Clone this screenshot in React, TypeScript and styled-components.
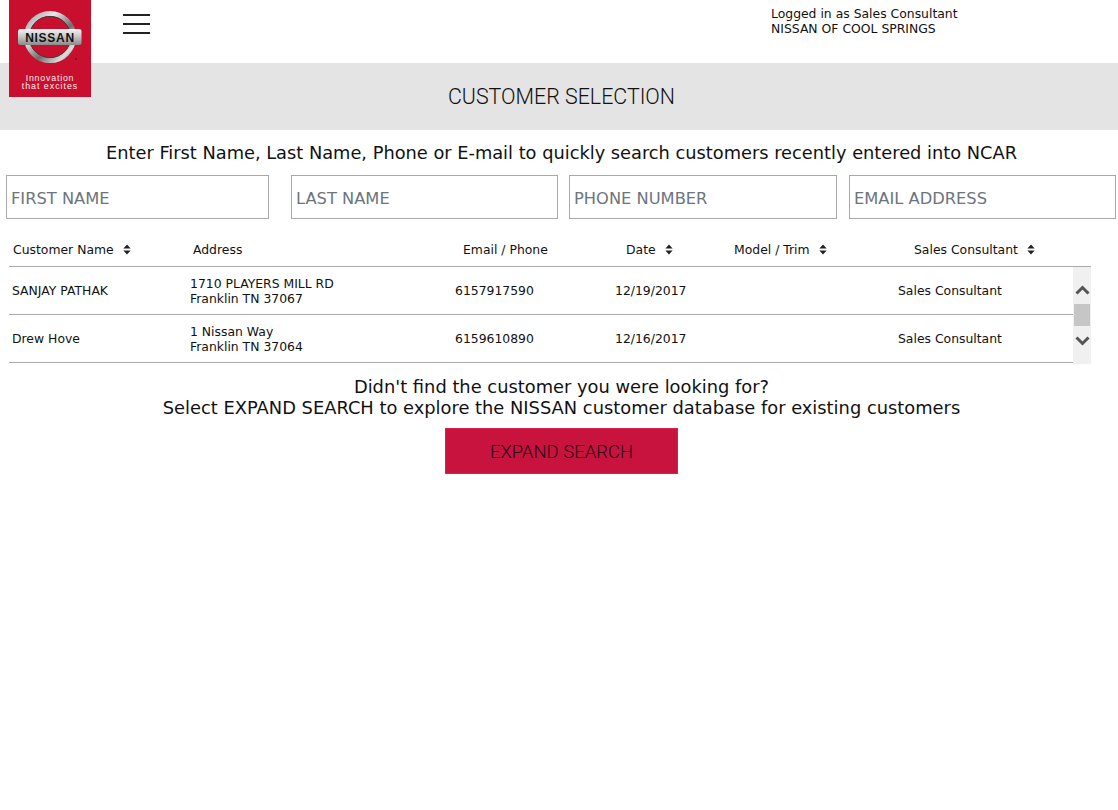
import styled, { createGlobalStyle } from 'styled-components';

const GlobalStyle = createGlobalStyle`
  html, body {
    margin: 0;
    padding: 0;
    background: #fff;
    font-family: "DejaVu Sans", "Liberation Sans", sans-serif;
    color: #111;
  }
`;

const Page = styled.div`
  position: relative;
  width: 1118px;
  height: 810px;
  overflow: hidden;
`;

const TopBar = styled.header`
  height: 63px;
  display: flex;
  padding-left: 123px;
`;

const MenuButton = styled.button`
  width: 27px;
  height: 20px;
  margin-top: 14px;
  padding: 0;
  border: none;
  background: none;
  display: flex;
  flex-direction: column;
  justify-content: space-between;
`;

const MenuLine = styled.span`
  display: block;
  height: 2px;
  background: #222;
`;

const UserInfo = styled.div`
  margin-left: 621px;
  padding-top: 6px;
  font-size: 12.4px;
  line-height: 15px;
  white-space: nowrap;
`;

const LogoBox = styled.div`
  position: absolute;
  left: 9px;
  top: 0;
  width: 82px;
  height: 97px;
  background: #c8102e;
`;

const Banner = styled.div`
  height: 67px;
  padding-left: 5px;
  background: #e4e4e4;
  display: flex;
  align-items: center;
  justify-content: center;
  font-family: Roboto, sans-serif;
  font-weight: 300;
  font-size: 21.4px;
  color: #111;
`;

const Intro = styled.p`
  margin: 0;
  height: 45px;
  padding-left: 5px;
  line-height: 45px;
  text-align: center;
  font-size: 17.8px;
  white-space: nowrap;
`;

const SearchRow = styled.div`
  display: flex;
  padding-left: 6px;
`;

const SearchInput = styled.input<{ $width: number; $after: number }>`
  box-sizing: border-box;
  width: ${(p) => p.$width}px;
  height: 44px;
  margin-right: ${(p) => p.$after}px;
  padding: 3px 4px 0;
  border: 1px solid #a9a9a9;
  outline: none;
  font-family: inherit;
  font-size: 16.3px;
  &::placeholder {
    color: #6c757d;
    opacity: 1;
  }
`;

const TableWrap = styled.div`
  width: 1082px;
  margin-left: 9px;
  margin-top: 11px;
`;

const HeadRow = styled.div`
  display: grid;
  grid-template-columns: 180px 270px 163px 108px 180px 181px;
  height: 34px;
  padding-top: 2px;
  align-items: center;
  border-bottom: 1px solid #aaa;
  font-size: 12.4px;
`;

const HeadCell = styled.div<{ $inset: number }>`
  display: flex;
  align-items: center;
  gap: 9px;
  padding-left: ${(p) => p.$inset}px;
  white-space: nowrap;
`;

const Body = styled.div`
  display: flex;
`;

const Rows = styled.div`
  width: 1064px;
`;

const Row = styled.div`
  display: grid;
  grid-template-columns: 177px 266px 160px 105px 177px 179px;
  height: 46px;
  padding-top: 1px;
  align-items: center;
  border-bottom: 1px solid #aaa;
  font-size: 12.4px;
  line-height: 15.5px;
`;

const Cell = styled.div<{ $inset: number }>`
  padding-left: ${(p) => p.$inset}px;
  white-space: nowrap;
`;

const ScrollTrack = styled.div`
  width: 18px;
  height: 97px;
  background: #f0f0f0;
  display: flex;
  flex-direction: column;
  align-items: center;
  padding-top: 18px;
  box-sizing: border-box;
`;

const ScrollThumb = styled.div`
  width: 16px;
  height: 22px;
  margin: 9px 0 10px;
  background: #c6c6c6;
`;

const Notice = styled.p`
  margin: 12px 0 0;
  padding-left: 5px;
  text-align: center;
  font-size: 17.85px;
  line-height: 21px;
  white-space: nowrap;
`;

const ExpandButton = styled.button`
  display: block;
  width: 233px;
  height: 46px;
  margin: 10px 0 0 445px;
  padding: 1px 0 0;
  border: 1px solid #d9234a;
  background: #c8133f;
  color: #2a0510;
  font-family: Roboto, sans-serif;
  font-weight: 300;
  font-size: 18.5px;
`;

const SortIcon = () => (
  <svg width="8" height="11" viewBox="0 0 8 11">
    <path d="M4 0.5 L7.6 4.5 H0.4 Z M4 10.5 L7.6 6.5 H0.4 Z" fill="#222" />
  </svg>
);

const Chevron = ({ up }: { up?: boolean }) => (
  <svg width="15" height="10" viewBox="0 0 15 10">
    <path
      d={up ? 'M1.5 8.5 L7.5 2.5 L13.5 8.5' : 'M1.5 1.5 L7.5 7.5 L13.5 1.5'}
      fill="none"
      stroke="#555"
      strokeWidth="3"
    />
  </svg>
);

const Logo = () => (
  <svg width="82" height="97" viewBox="0 0 82 97">
    <defs>
      <linearGradient id="chrome" x1="0" y1="0" x2="1" y2="1">
        <stop offset="0" stopColor="#9a9a9a" />
        <stop offset="0.3" stopColor="#e8e8e8" />
        <stop offset="0.6" stopColor="#6e6e6e" />
        <stop offset="0.85" stopColor="#dcdcdc" />
        <stop offset="1" stopColor="#777" />
      </linearGradient>
      <linearGradient id="plate" x1="0" y1="0" x2="0" y2="1">
        <stop offset="0" stopColor="#f4f4f4" />
        <stop offset="0.5" stopColor="#c4c4c4" />
        <stop offset="1" stopColor="#8a8a8a" />
      </linearGradient>
    </defs>
    <circle cx="41" cy="37" r="23.5" fill="none" stroke="url(#chrome)" strokeWidth="5" />
    <circle cx="41" cy="37" r="20.6" fill="none" stroke="#4a3a3c" strokeWidth="1" />
    <rect x="9" y="29" width="63.5" height="16" rx="2.5" fill="url(#plate)" />
    <text
      x="41"
      y="41.5"
      textAnchor="middle"
      fontFamily="Liberation Sans, sans-serif"
      fontWeight="700"
      fontSize="12"
      letterSpacing="0.7"
      fill="#111"
    >
      NISSAN
    </text>
    <circle cx="67" cy="59" r="1" fill="#3a1a20" />
    <text
      x="41"
      y="81"
      textAnchor="middle"
      fontFamily="Liberation Sans, sans-serif"
      fontSize="8.8"
      letterSpacing="0.8"
      fill="#fdeaec"
    >
      Innovation
    </text>
    <text
      x="41"
      y="88.5"
      textAnchor="middle"
      fontFamily="Liberation Sans, sans-serif"
      fontSize="8.8"
      letterSpacing="1"
      fill="#fdeaec"
    >
      that excites
    </text>
  </svg>
);

const fields = [
  { placeholder: 'FIRST NAME', width: 263, after: 22 },
  { placeholder: 'LAST NAME', width: 267, after: 11 },
  { placeholder: 'PHONE NUMBER', width: 268, after: 12 },
  { placeholder: 'EMAIL ADDRESS', width: 267, after: 0 },
];

const columns = [
  { label: 'Customer Name', inset: 4, sortable: true },
  { label: 'Address', inset: 4, sortable: false },
  { label: 'Email / Phone', inset: 4, sortable: false },
  { label: 'Date', inset: 4, sortable: true },
  { label: 'Model / Trim', inset: 4, sortable: true },
  { label: 'Sales Consultant', inset: 4, sortable: true },
];

const customers = [
  {
    name: 'SANJAY PATHAK',
    street: '1710 PLAYERS MILL RD',
    city: 'Franklin TN 37067',
    phone: '6157917590',
    date: '12/19/2017',
    consultant: 'Sales Consultant',
  },
  {
    name: 'Drew Hove',
    street: '1 Nissan Way',
    city: 'Franklin TN 37064',
    phone: '6159610890',
    date: '12/16/2017',
    consultant: 'Sales Consultant',
  },
];

const App = () => {
  return (
    <Page>
      <GlobalStyle />
      <LogoBox>
        <Logo />
      </LogoBox>
      <TopBar>
        <MenuButton aria-label="Menu">
          <MenuLine />
          <MenuLine />
          <MenuLine />
        </MenuButton>
        <UserInfo>
          Logged in as Sales Consultant
          <br />
          NISSAN OF COOL SPRINGS
        </UserInfo>
      </TopBar>
      <Banner>CUSTOMER SELECTION</Banner>
      <Intro>Enter First Name, Last Name, Phone or E-mail to quickly search customers recently entered into NCAR</Intro>
      <SearchRow>
        {fields.map((f) => (
          <SearchInput key={f.placeholder} placeholder={f.placeholder} $width={f.width} $after={f.after} />
        ))}
      </SearchRow>
      <TableWrap>
        <HeadRow>
          {columns.map((col) => (
            <HeadCell key={col.label} $inset={col.inset}>
              {col.label}
              {col.sortable && <SortIcon />}
            </HeadCell>
          ))}
        </HeadRow>
        <Body>
          <Rows>
            {customers.map((c) => (
              <Row key={c.phone}>
                <Cell $inset={3}>{c.name}</Cell>
                <Cell $inset={4}>
                  {c.street}
                  <br />
                  {c.city}
                </Cell>
                <Cell $inset={3}>{c.phone}</Cell>
                <Cell $inset={3}>{c.date}</Cell>
                <Cell $inset={0} />
                <Cell $inset={4}>{c.consultant}</Cell>
              </Row>
            ))}
          </Rows>
          <ScrollTrack>
            <Chevron up />
            <ScrollThumb />
            <Chevron />
          </ScrollTrack>
        </Body>
      </TableWrap>
      <Notice>
        Didn't find the customer you were looking for?
        <br />
        Select EXPAND SEARCH to explore the NISSAN customer database for existing customers
      </Notice>
      <ExpandButton>EXPAND SEARCH</ExpandButton>
    </Page>
  );
};

export default App;
